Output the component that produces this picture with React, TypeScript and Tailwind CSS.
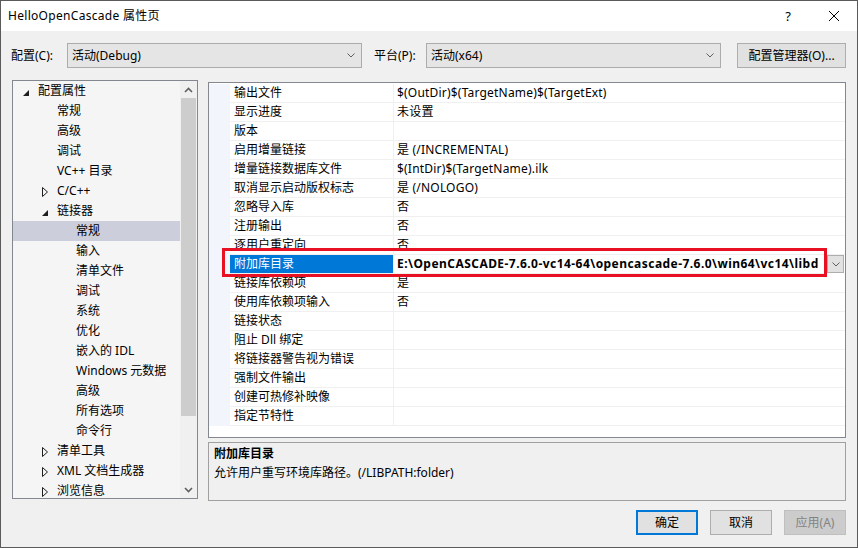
import React from "react";

type TreeItem = { label: string; level: number; toggle?: "open" | "closed"; selected?: boolean };

const tree: TreeItem[] = [
  { label: "配置属性", level: 0, toggle: "open" },
  { label: "常规", level: 1 },
  { label: "高级", level: 1 },
  { label: "调试", level: 1 },
  { label: "VC++ 目录", level: 1 },
  { label: "C/C++", level: 1, toggle: "closed" },
  { label: "链接器", level: 1, toggle: "open" },
  { label: "常规", level: 2, selected: true },
  { label: "输入", level: 2 },
  { label: "清单文件", level: 2 },
  { label: "调试", level: 2 },
  { label: "系统", level: 2 },
  { label: "优化", level: 2 },
  { label: "嵌入的 IDL", level: 2 },
  { label: "Windows 元数据", level: 2 },
  { label: "高级", level: 2 },
  { label: "所有选项", level: 2 },
  { label: "命令行", level: 2 },
  { label: "清单工具", level: 1, toggle: "closed" },
  { label: "XML 文档生成器", level: 1, toggle: "closed" },
  { label: "浏览信息", level: 1, toggle: "closed" },
];

const rows: { name: string; value: string; selected?: boolean }[] = [
  { name: "输出文件", value: "$(OutDir)$(TargetName)$(TargetExt)" },
  { name: "显示进度", value: "未设置" },
  { name: "版本", value: "" },
  { name: "启用增量链接", value: "是 (/INCREMENTAL)" },
  { name: "增量链接数据库文件", value: "$(IntDir)$(TargetName).ilk" },
  { name: "取消显示启动版权标志", value: "是 (/NOLOGO)" },
  { name: "忽略导入库", value: "否" },
  { name: "注册输出", value: "否" },
  { name: "逐用户重定向", value: "否" },
  { name: "附加库目录", value: "E:\\OpenCASCADE-7.6.0-vc14-64\\opencascade-7.6.0\\win64\\vc14\\libd", selected: true },
  { name: "链接库依赖项", value: "是" },
  { name: "使用库依赖项输入", value: "否" },
  { name: "链接状态", value: "" },
  { name: "阻止 Dll 绑定", value: "" },
  { name: "将链接器警告视为错误", value: "" },
  { name: "强制文件输出", value: "" },
  { name: "创建可热修补映像", value: "" },
  { name: "指定节特性", value: "" },
];

const Chevron = () => (
  <svg width="8" height="5" viewBox="0 0 8 5">
    <path d="M0.5 0.5 L4 4 L7.5 0.5" stroke="#606060" fill="none" />
  </svg>
);

function Combo({ text, width }: { text: string; width: string }) {
  return (
    <div className={`${width} h-[25px] border border-[#acacac] bg-[#e5e5e5] flex items-center pl-[4px] pr-[6px]`}>
      <span className="flex-1">{text}</span>
      <Chevron />
    </div>
  );
}

export default function App() {
  return (
    <div className="w-[858px] h-[548px] border border-[#5a5a5a] bg-[#f0f0f0] flex flex-col text-[12px] text-black font-['Noto_Sans','Noto_Sans_CJK_SC',sans-serif] leading-none overflow-hidden">
      {/* Title bar */}
      <div className="h-[30px] bg-white flex items-center shrink-0">
        <span className="pl-[7px] flex-1 text-[12px] tracking-[0.3px]">HelloOpenCascade 属性页</span>
        <div className="w-[46px] h-full flex items-center justify-center text-[13px]">?</div>
        <div className="w-[46px] h-full flex items-center justify-center">
          <svg width="10" height="10" viewBox="0 0 10 10">
            <path d="M0 0L10 10M10 0L0 10" stroke="#000" strokeWidth="1" />
          </svg>
        </div>
      </div>

      {/* Toolbar */}
      <div className="h-[49px] shrink-0 flex items-start pt-[12px]">
        <div className="w-[66px] h-[25px] pl-[10px] flex items-center">配置(C):</div>
        <Combo text="活动(Debug)" width="w-[295px]" />
        <div className="w-[64px] h-[25px] pl-[12px] flex items-center">平台(P):</div>
        <Combo text="活动(x64)" width="w-[295px]" />
        <div className="ml-[16px] w-[109px] h-[25px] border border-[#adadad] bg-[#e1e1e1] flex items-center justify-center">
          配置管理器(O)...
        </div>
      </div>

      {/* Main */}
      <div className="flex items-start ml-[11px] shrink-0">
        {/* Tree */}
        <div className="w-[186px] h-[419px] border border-[#828790] bg-[#f5f5f5] flex overflow-hidden">
          <div className="w-[167px] h-full overflow-hidden">
            {tree.map((t, i) => (
              <div
                key={i}
                className={`h-[20px] flex items-center ${t.selected ? "bg-[#cccedb]" : ""}`}
                style={{ paddingLeft: 6 + 19 * t.level }}
              >
                <div className="w-[19px] h-full flex items-center pl-[4px] shrink-0">
                  {t.toggle === "open" && (
                    <svg width="6" height="6" viewBox="0 0 6 6" className="mt-[3px]">
                      <polygon points="6,0 6,6 0,6" fill="#1e1e1e" />
                    </svg>
                  )}
                  {t.toggle === "closed" && (
                    <svg width="6" height="10" viewBox="0 0 6 10" className="mt-[1px]">
                      <polygon points="0.5,0.5 5.5,5 0.5,9.5" fill="none" stroke="#1e1e1e" />
                    </svg>
                  )}
                </div>
                <span className="whitespace-nowrap">{t.label}</span>
              </div>
            ))}
          </div>
          <div className="w-[17px] h-full bg-[#f0f0f0] flex flex-col">
            <div className="h-[17px] flex items-center justify-center">
              <svg width="9" height="6" viewBox="0 0 9 6">
                <path d="M1 5 L4.5 1.5 L8 5" stroke="#606060" strokeWidth="1.6" fill="none" />
              </svg>
            </div>
            <div className="h-[318px] mx-[1px] bg-[#cdcdcd]" />
            <div className="flex-1" />
            <div className="h-[17px] flex items-center justify-center">
              <svg width="9" height="6" viewBox="0 0 9 6">
                <path d="M1 1 L4.5 4.5 L8 1" stroke="#606060" strokeWidth="1.6" fill="none" />
              </svg>
            </div>
          </div>
        </div>

        {/* Right column */}
        <div className="ml-[10px] w-[638px] flex flex-col">
          <div className="relative mt-[2px] h-[356px] border border-[#828790] bg-white">
            <div className="flex flex-col pt-[1px]">
              {rows.map((r, i) => (
                <div key={i} className="h-[19px] flex">
                  <div className="w-[21px] h-full bg-[#f2f6fc] shrink-0" />
                  <div
                    className={`w-[163px] h-full shrink-0 border-b border-[#f0f0f0] flex items-center pl-[4px] whitespace-nowrap ${
                      r.selected ? "bg-[#0078d7] text-white" : ""
                    }`}
                  >
                    {r.name}
                  </div>
                  <div className="w-[1px] h-full bg-[#f0f0f0] shrink-0" />
                  {r.selected ? (
                    <>
                      <div className="w-[433px] h-full border-b border-[#f0f0f0] flex items-center pl-[3px] font-bold tracking-[0.45px] whitespace-nowrap overflow-visible">
                        {r.value}
                      </div>
                      <div className="w-[17px] h-[18px] border border-[#adadad] bg-[#e1e1e1] flex items-center justify-center">
                        <Chevron />
                      </div>
                    </>
                  ) : (
                    <div className="flex-1 h-full border-b border-[#f0f0f0] flex items-center pl-[3px] tracking-[0.2px] whitespace-nowrap">
                      {r.value}
                    </div>
                  )}
                </div>
              ))}
            </div>
            <div className="absolute left-[13px] top-[165px] w-[605px] h-[29px] border-[3px] border-[#e81123] pointer-events-none" />
          </div>

          <div className="mt-[4px] h-[59px] border border-[#a0a0a0] bg-[#f0f0f0] pl-[5px] pt-[1px]">
            <div className="h-[19px] flex items-center font-bold">附加库目录</div>
            <div className="h-[19px] flex items-center">允许用户重写环境库路径。(/LIBPATH:folder)</div>
          </div>
        </div>
      </div>

      {/* Buttons */}
      <div className="mt-[9px] flex justify-end mr-[11px] gap-[12px]">
        <div className="w-[62px] h-[25px] border-2 border-[#0078d7] bg-[#e1e1e1] flex items-center justify-center">确定</div>
        <div className="w-[62px] h-[25px] border border-[#adadad] bg-[#e1e1e1] flex items-center justify-center">取消</div>
        <div className="w-[62px] h-[25px] border border-[#bfbfbf] bg-[#cccccc] text-[#838383] flex items-center justify-center">应用(A)</div>
      </div>
    </div>
  );
}
